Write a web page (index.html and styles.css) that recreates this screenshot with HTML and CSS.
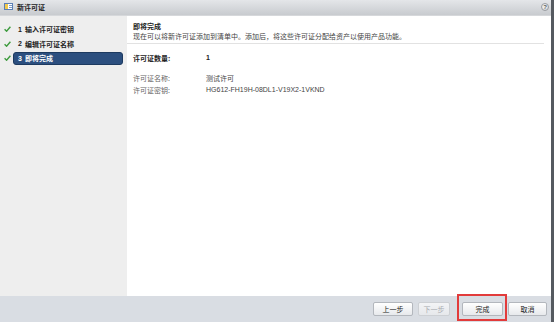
FILE: index.html
```html
<!DOCTYPE html>
<html lang="zh-CN">
<head>
<meta charset="utf-8">
<title>新许可证</title>
<link rel="stylesheet" href="styles.css">
</head>
<body>
<div class="window">
  <div class="titlebar">
    <svg class="app-icon" width="9" height="7" viewBox="0 0 9 7">
      <rect x="0.5" y="0.5" width="8" height="6" fill="#fff" stroke="#5b7fb5"/>
      <rect x="1" y="1" width="3" height="5" fill="#f2c94c"/>
      <rect x="5" y="2" width="3" height="1" fill="#7f9cc7"/>
      <rect x="5" y="4" width="3" height="1" fill="#7f9cc7"/>
    </svg>
    <span class="title">新许可证</span>
    <span class="help">?</span>
  </div>
  <div class="main">
    <div class="sidebar">
      <div class="step">
        <span class="check"><svg width="7" height="6" viewBox="0 0 7 6"><path d="M0.6 3.2 L2.6 5.2 L6.4 0.8" fill="none" stroke="#3d9b3d" stroke-width="1.4"/></svg></span>
        <span class="step-label"><span class="num">1</span>输入许可证密钥</span>
      </div>
      <div class="step">
        <span class="check"><svg width="7" height="6" viewBox="0 0 7 6"><path d="M0.6 3.2 L2.6 5.2 L6.4 0.8" fill="none" stroke="#3d9b3d" stroke-width="1.4"/></svg></span>
        <span class="step-label"><span class="num">2</span>编辑许可证名称</span>
      </div>
      <div class="step">
        <span class="check"><svg width="7" height="6" viewBox="0 0 7 6"><path d="M0.6 3.2 L2.6 5.2 L6.4 0.8" fill="none" stroke="#3d9b3d" stroke-width="1.4"/></svg></span>
        <span class="step-label active"><span class="num">3</span>即将完成</span>
      </div>
    </div>
    <div class="content">
      <div class="heading">即将完成</div>
      <div class="subtitle">现在可以将新许可证添加到清单中。添加后，将这些许可证分配给资产以使用产品功能。</div>
      <div class="separator"></div>
      <div class="summary">
        <div class="row qty"><span class="label strong">许可证数量:</span><span class="value strong">1</span></div>
        <div class="details">
          <div class="row"><span class="label">许可证名称:</span><span class="value">测试许可</span></div>
          <div class="row"><span class="label">许可证密钥:</span><span class="value latin">HG612-FH19H-08DL1-V19X2-1VKND</span></div>
        </div>
      </div>
    </div>
  </div>
  <div class="footer">
    <button class="btn btn-back">上一步</button>
    <button class="btn btn-next" disabled>下一步</button>
    <span class="highlight"><button class="btn btn-finish">完成</button></span>
    <button class="btn btn-cancel">取消</button>
  </div>
</div>
</body>
</html>
```
FILE: styles.css
```css
html, body {
  margin: 0;
  padding: 0;
  width: 554px;
  height: 322px;
  overflow: hidden;
  background: #ffffff;
}

body {
  font-family: "Noto Sans CJK SC", "Liberation Sans", sans-serif;
  font-size: 7px;
  color: #333;
}

.window {
  box-sizing: border-box;
  width: 554px;
  height: 322px;
  display: flex;
  flex-direction: column;
  border-right: 3px solid #555a60;
}

.titlebar {
  height: 16px;
  flex: none;
  display: flex;
  align-items: center;
  padding-left: 4px;
  padding-right: 2px;
  background: linear-gradient(#e4e6e9, #c8cbcf);
  border-bottom: 1px solid #d6d8db;
  box-sizing: border-box;
  padding-bottom: 2px;
}

.app-icon {
  display: block;
  margin-right: 4px;
}

.title {
  font-weight: bold;
  font-size: 7px;
  color: #222;
  flex: 1;
  line-height: 10px;
}

.help {
  width: 8px;
  height: 8px;
  box-sizing: border-box;
  border-radius: 50%;
  border: 1px solid #9a9da2;
  background: radial-gradient(circle at 40% 35%, #ffffff, #c9cbce);
  color: #555;
  font-family: "Liberation Sans", sans-serif;
  font-weight: bold;
  font-size: 6px;
  line-height: 6px;
  text-align: center;
}

.main {
  flex: 1;
  display: flex;
  min-height: 0;
}

.sidebar {
  width: 127px;
  flex: none;
  background: #eeeeee;
  padding-top: 6.5px;
  box-sizing: border-box;
  display: flex;
  flex-direction: column;
  gap: 1.5px;
}

.step {
  display: flex;
  align-items: center;
  height: 13px;
}

.check {
  width: 13px;
  flex: none;
  padding-left: 4px;
  box-sizing: border-box;
  display: flex;
  align-items: center;
}

.check svg {
  display: block;
}

.step-label {
  width: 110px;
  height: 13px;
  box-sizing: border-box;
  display: flex;
  align-items: center;
  padding-left: 5px;
  font-weight: bold;
  color: #222;
  border-radius: 3px;
}

.step-label .num {
  font-family: "Liberation Sans", sans-serif;
  width: 7px;
  flex: none;
}

.step-label.active {
  background: #2c4f7f;
  border: 1px solid #1d3a60;
  color: #fff;
  padding-left: 4px;
}

.content {
  flex: 1;
  padding: 5px 7px 0 6px;
  box-sizing: border-box;
  background: #fff;
}

.heading {
  font-weight: bold;
  color: #222;
  line-height: 10px;
}

.subtitle {
  color: #444;
  line-height: 10px;
}

.separator {
  height: 1px;
  background: #e2e2e2;
  margin-top: 2px;
  margin-left: -6px;
}

.summary {
  padding-top: 8px;
}

.row {
  display: flex;
  line-height: 12px;
}

.label {
  width: 73px;
  flex: none;
  color: #666;
}

.value {
  color: #444;
}

.strong {
  font-weight: bold;
  color: #222;
}

.latin, .qty .value {
  font-family: "Liberation Sans", sans-serif;
}

.details {
  padding-top: 8px;
}

.footer {
  height: 26px;
  flex: none;
  background: #d9dde3;
  display: flex;
  justify-content: flex-end;
  align-items: flex-start;
  padding: 6px 4px 0 0;
  box-sizing: border-box;
}

.btn {
  height: 14px;
  box-sizing: border-box;
  border: 1px solid #b3b7bd;
  border-radius: 2px;
  background: linear-gradient(#ffffff, #e7e9ec);
  font-family: "Noto Sans CJK SC", sans-serif;
  font-size: 7px;
  color: #222;
  padding: 0;
  margin: 0;
  line-height: 12px;
  text-align: center;
}

.btn-back {
  width: 40px;
  margin-right: 5px;
}

.btn-next {
  width: 32px;
  margin-right: 12px;
  color: #a8abb0;
  border-color: #cdd0d4;
  background: linear-gradient(#f3f4f6, #e6e8eb);
}

.highlight {
  position: relative;
  display: block;
  margin-right: 5px;
}

.highlight::after {
  content: "";
  position: absolute;
  top: -8px;
  left: -5px;
  right: -4px;
  bottom: -5px;
  border: 2px solid #e23b3b;
}

.btn-finish {
  width: 41px;
  display: block;
}

.btn-cancel {
  width: 39px;
}
```
